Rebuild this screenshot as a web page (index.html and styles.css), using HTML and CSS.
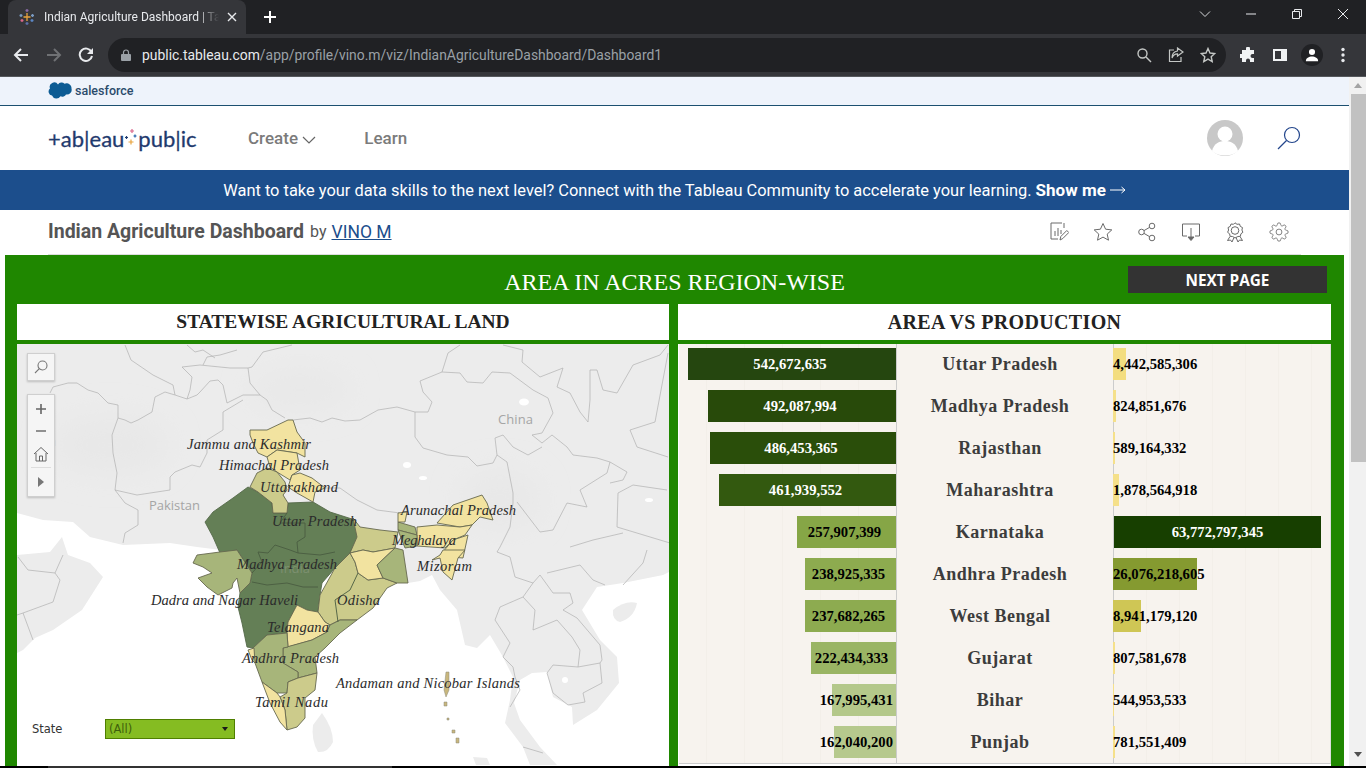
FILE: index.html
```html
<!DOCTYPE html>
<html lang="en">
<head>
  <meta charset="UTF-8">
  <title>Indian Agriculture Dashboard | Tableau Public</title>
  <link rel="stylesheet" href="styles.css">
</head>
<body>

<!-- browser chrome -->
<div class="tabstrip">
  <div class="tab">
    <svg class="favicon" viewBox="0 0 16 16" width="16" height="16" fill="none" stroke-width="1.3">
      <path d="M8 4v8M4.5 8h7" stroke="#e8a33d"/>
      <path d="M8 0v3M6.5 1.5h3" stroke="#8a6aa8"/>
      <path d="M8 13v3M6.5 14.5h3" stroke="#5c6fa8"/>
      <path d="M2 5v3M.5 6.500h3M13.500 5v3M12 6.500h3" stroke="#7b9bc2"/>
      <path d="M3 10v3M1.500 11.500h3" stroke="#d9668b"/>
      <path d="M13 10v3M11.500 11.500h3" stroke="#5b86c4"/>
    </svg>
    <span class="tab-title">Indian Agriculture Dashboard | Tableau Public</span>
    <svg class="tab-close" viewBox="0 0 10 10" width="10" height="10"><path d="M1 1l8 8M9 1l-8 8" stroke="#e8eaed" stroke-width="1.4"/></svg>
  </div>
  <svg class="new-tab" viewBox="0 0 12 12" width="12" height="12"><path d="M6 0v12M0 6h12" stroke="#fff" stroke-width="2"/></svg>
  <div class="window-controls">
    <svg viewBox="0 0 12 12" width="12" height="12"><path d="M1 3.500l5 5 5-5" fill="none" stroke="#d5d7da"/></svg>
    <svg viewBox="0 0 12 12" width="12" height="12"><path d="M1 6h10" stroke="#e8eaed"/></svg>
    <svg viewBox="0 0 12 12" width="12" height="12"><path d="M1.500 3.500h7v7h-7zM3.500 3.500v-2h7v7h-2" fill="none" stroke="#e8eaed"/></svg>
    <svg viewBox="0 0 12 12" width="12" height="12"><path d="M1 1l10 10M11 1L1 11" stroke="#e8eaed"/></svg>
  </div>
</div>

<div class="toolbar">
  <svg class="nav-btn" viewBox="0 0 16 16" width="16" height="16"><path d="M15 8H2M8 2L2 8l6 6" fill="none" stroke="#e8eaed" stroke-width="2"/></svg>
  <svg class="nav-btn" viewBox="0 0 16 16" width="16" height="16"><path d="M1 8h13M8 2l6 6-6 6" fill="none" stroke="#6f7174" stroke-width="2"/></svg>
  <svg class="nav-btn" viewBox="0 0 16 16" width="16" height="16"><path d="M13.500 5A6.200 6.200 0 1 0 14 9" fill="none" stroke="#e8eaed" stroke-width="2"/><path d="M15 1v6H9z" fill="#e8eaed"/></svg>
  <div class="omnibox">
    <svg class="lock" viewBox="0 0 10 12" width="10" height="12"><path d="M2.500 5V3.500a2.500 2.500 0 0 1 5 0V5" fill="none" stroke="#9aa0a6" stroke-width="1.200"/><rect y="5" width="10" height="7" rx="1" fill="#9aa0a6"/></svg>
    <span class="url"><b>public.tableau.com</b>/app/profile/vino.m/viz/IndianAgricultureDashboard/Dashboard1</span>
    <div class="omni-icons">
      <svg viewBox="0 0 16 16" width="16" height="16" fill="none" stroke="#c4c7c5" stroke-width="1.400"><circle cx="6.500" cy="6.500" r="4.500"/><path d="M10 10l5 5"/></svg>
      <svg viewBox="0 0 16 16" width="16" height="16" fill="none" stroke="#c4c7c5" stroke-width="1.200"><path d="M6 3H1.500v11.500H13V10"/><path d="M9.500 1l5.500 4-5.500 4V6.800C7 6.800 5 8 4 11c0-4 2-6.500 5.500-7z"/></svg>
      <svg viewBox="0 0 16 16" width="16" height="16" fill="none" stroke="#c4c7c5" stroke-width="1.400"><path d="M8 1.500l2 4.500 4.800.5-3.600 3.200 1 4.800L8 12.100l-4.200 2.400 1-4.800L1.200 6.500 6 6z"/></svg>
    </div>
  </div>
  <div class="ext-icons">
    <svg viewBox="0 0 16 16" width="16" height="16"><path d="M6 1.500a2 2 0 0 1 4 0V3h4v4h-1.500a2 2 0 0 0 0 4H14v4h-4v-1.500a2 2 0 0 0-4 0V15H2v-4H.8a2 2 0 0 1 0-4H2V3h4z" fill="#f1f3f4"/></svg>
    <svg viewBox="0 0 16 16" width="16" height="16"><path d="M1 2h14v12H1z" fill="#f1f3f4"/><path d="M3 4h6v8H3z" fill="#35363a"/></svg>
    <span class="profile">
      <svg viewBox="0 0 16 16" width="14" height="14"><circle cx="8" cy="4.500" r="3.500" fill="#fff"/><path d="M1 15c0-7 14-7 14 0z" fill="#fff"/></svg>
    </span>
    <svg class="menu-dots" viewBox="0 0 4 16" width="4" height="16"><circle cx="2" cy="2.500" r="1.700" fill="#e8eaed"/><circle cx="2" cy="8" r="1.700" fill="#e8eaed"/><circle cx="2" cy="13.500" r="1.700" fill="#e8eaed"/></svg>
  </div>
</div>

<div class="viewport">
  <div class="page">

    <div class="sf-bar">
      <svg viewBox="0 0 24 17" width="24" height="17"><path d="M10 2.500a4.300 4.300 0 0 1 6.500-.8 5 5 0 0 1 7 4.800 4.800 4.800 0 0 1-5.500 6 4 4 0 0 1-5.500 1.800 4.800 4.800 0 0 1-8.500-.8A4 4 0 0 1 2 6.500a4.500 4.500 0 0 1 8-4z" fill="#0d5c94"/></svg>
      <span>salesforce</span>
    </div>

    <header class="site-header">
      <div class="logo">
        <span>+ab|eau</span>
        <svg viewBox="0 0 14 18" width="14" height="18" fill="none" stroke-width="1.200">
          <path d="M8 0v4M6 2h4" stroke="#d9668b"/>
          <path d="M2.500 7v3M1 8.500h3" stroke="#1f3a6e"/>
          <path d="M11 5.500v3M9.500 7h3" stroke="#1f5fa8"/>
          <path d="M7 10.500v5M4.500 13h5" stroke="#e8a33d"/>
        </svg>
        <span>pub|ic</span>
      </div>
      <nav class="site-nav">
        <a>Create <svg viewBox="0 0 14 8" width="14" height="8"><path d="M1 1l6 6 6-6" fill="none" stroke="#666" stroke-width="1.200"/></svg></a>
        <a>Learn</a>
      </nav>
      <div class="header-right">
        <svg viewBox="0 0 36 36" width="36" height="36">
          <circle cx="18" cy="18" r="18" fill="#c8c8c8"/>
          <circle cx="18" cy="14" r="7.500" fill="#fff"/>
          <path d="M5 31c2-8 8-10 13-10s11 2 13 10c-6 6-20 6-26 0z" fill="#fff"/>
        </svg>
        <svg viewBox="0 0 24 24" width="24" height="24" fill="none" stroke="#23468c" stroke-width="1.200"><circle cx="15" cy="9" r="7.500"/><path d="M9.500 14.500L1 23"/></svg>
      </div>
    </header>

    <div class="promo">
      <span>Want to take your data skills to the next level? Connect with the Tableau Community to accelerate your learning.</span>
      <b>Show me</b>
      <svg viewBox="0 0 16 10" width="16" height="10"><path d="M0 5h15M11.500 2l3.500 3-3.500 3" fill="none" stroke="#fff"/></svg>
    </div>

    <div class="viz-head">
      <h1>Indian Agriculture Dashboard</h1>
      <span class="by">by</span>
      <a class="author">VINO M</a>
      <div class="viz-actions">
        <svg viewBox="0 0 20 20" width="20" height="20"><path d="M13 1H2v16h7M15 1v5M6 14V9M9 14V6M12 12V8"/><path d="M11 18l.8-3.500 6-6 2 2-6 6z"/></svg>
        <svg viewBox="0 0 20 20" width="20" height="20"><path d="M10 1.500l2.600 5.700 6.200.7-4.600 4.200 1.300 6.100L10 15.100l-5.500 3.100 1.300-6.100L1.200 7.900l6.200-.7z"/></svg>
        <svg viewBox="0 0 20 20" width="20" height="20"><circle cx="4.500" cy="10" r="2.800"/><circle cx="15" cy="4" r="2.800"/><circle cx="15" cy="16" r="2.800"/><path d="M7 8.600l5.500-3.200M7 11.400l5.500 3.200"/></svg>
        <svg viewBox="0 0 20 20" width="20" height="20"><path d="M6 14H1.500V2h17v12H14M10 6v10"/><path d="M7 15h6l-3 3.500z" fill="#666"/></svg>
        <svg viewBox="0 0 20 20" width="20" height="20"><path d="M10 .8l2 1.500 2.500-.3.800 2.400 2.200 1.200-.6 2.400 1 2.300-2 1.500-.5 2.500-2.500.2L10 16l-2.400-1.500-2.500-.2-.5-2.500-2-1.500 1-2.300-.6-2.400 2.200-1.200.8-2.400 2.500.3z"/><circle cx="10" cy="8.500" r="3.800"/><path d="M5 14.500l-2.500 4 3-.5 1.500 2 2-4.500M15 14.500l2.500 4-3-.5-1.500 2-2-4.500"/></svg>
        <svg viewBox="0 0 24 24" width="20" height="20" stroke-width="1.200"><circle cx="12" cy="12" r="3.500"/><path d="M19.400 15a1.650 1.650 0 0 0 .33 1.820l.06.06a2 2 0 0 1 0 2.830 2 2 0 0 1-2.830 0l-.06-.06a1.650 1.650 0 0 0-1.820-.33 1.650 1.650 0 0 0-1 1.510V21a2 2 0 0 1-2 2 2 2 0 0 1-2-2v-.09A1.650 1.650 0 0 0 9 19.400a1.650 1.650 0 0 0-1.820.33l-.06.06a2 2 0 0 1-2.830 0 2 2 0 0 1 0-2.830l.06-.06a1.650 1.650 0 0 0 .33-1.820 1.650 1.650 0 0 0-1.510-1H3a2 2 0 0 1-2-2 2 2 0 0 1 2-2h.09A1.650 1.650 0 0 0 4.600 9a1.650 1.650 0 0 0-.33-1.820l-.06-.06a2 2 0 0 1 0-2.830 2 2 0 0 1 2.830 0l.06.06a1.650 1.650 0 0 0 1.820.33H9a1.650 1.650 0 0 0 1-1.510V3a2 2 0 0 1 2-2 2 2 0 0 1 2 2v.09a1.650 1.650 0 0 0 1 1.510 1.650 1.650 0 0 0 1.820-.33l.06-.06a2 2 0 0 1 2.830 0 2 2 0 0 1 0 2.830l-.06.06a1.650 1.650 0 0 0-.33 1.820V9a1.650 1.650 0 0 0 1.510 1H21a2 2 0 0 1 2 2 2 2 0 0 1-2 2h-.09a1.650 1.650 0 0 0-1.510 1z"/></svg>
      </div>
    </div>

    <main class="dash">
      <div class="dash-top">
        <span></span>
        <h2>AREA IN ACRES REGION-WISE</h2>
        <button class="next-page">NEXT PAGE</button>
      </div>

      <div class="dash-cards">
        <section class="card">
          <h3>STATEWISE AGRICULTURAL LAND</h3>
          <div class="map">
            <svg class="map-svg" viewBox="17 344 652 424" width="652" height="424">
              <defs>
                <filter id="soft"><feGaussianBlur stdDeviation="0.7"/></filter>
                <filter id="haze"><feGaussianBlur stdDeviation="14"/></filter>
              </defs>

              <!-- land -->
              <g class="land" filter="url(#soft)">
                <path d="M17 344H669V572L663 575 623 583 597 587 582 610 600 640 617 657 619 683 597 710 573 725 572 707 553 697 547 672 532 673 520 680 514 703 520 720 540 747 557 765H530L523 747 505 723 510 700 513 677 503 657 490 635 477 648 465 645 457 610 440 590 432 575 420 581 408 583 300 560 197 547 170 543 123 545 90 537 73 522 43 520 17 513Z"/>
                <path d="M17 555L50 552 62 537 68 555 90 563 103 577 82 610 53 630 35 638 23 650 17 653Z"/>
                <path d="M613 610Q625 600 637 603 634 618 620 622 612 620 613 610Z"/>
                <path d="M322 713Q333 728 333 742 328 753 318 752 311 740 313 725Z"/>
                <path d="M473 757L487 758 490 765H476Z"/>
              </g>
              <g class="haze" filter="url(#haze)">
                <ellipse cx="110" cy="445" rx="60" ry="30"/>
                <ellipse cx="500" cy="500" rx="40" ry="30"/>
                <ellipse cx="300" cy="390" rx="50" ry="20"/>
              </g>
              <g class="lakes">
                <ellipse cx="524" cy="402" rx="5" ry="3.500"/>
                <ellipse cx="407" cy="465" rx="4" ry="3"/>
                <ellipse cx="423" cy="478" rx="4" ry="2"/>
                <ellipse cx="649" cy="500" rx="4" ry="2"/>
                <ellipse cx="565" cy="680" rx="3" ry="3"/>
              </g>

              <!-- country borders -->
              <g class="borders">
                <path d="M50 393L53 387 68 383 77 383 88 390 98 393 108 403 118 405 118 418 112 435 113 453 117 473 115 490 125 503 138 510 138 525 125 533 123 543"/>
                <path d="M118 418L125 420 131 423 138 420 152 412 155 397 165 392 175 395 187 399 197 395 200 392 210 381 218 380 223 385 227 403 243 395 260 395 267 400 272 410 285 418"/>
                <path d="M115 490L137 495 170 490 170 477 175 472 192 465 200 467 207 453 207 440 223 430 223 412 243 400"/>
                <path d="M125 345L131 360 153 375 173 385 175 395"/>
                <path d="M182 367L192 377 190 390 187 399M182 367L200 365 230 368 248 368 250 383 260 395M248 368L252 367 263 352 292 345"/>
                <path d="M203 365L207 357 220 355 237 350M187 345L195 352 203 350 215 358"/>
                <path d="M293 420L310 418 322 422 332 418 345 421 360 420 378 410 397 407 415 412 428 412 432 402 423 392 420 381 442 372 448 353 460 345"/>
                <path d="M415 412L415 437 423 448 447 455 468 457 477 466 493 463 497 455 507 462 513 493 513 503 510 527 500 547 497 552"/>
                <path d="M325 488L340 488 357 500 377 510 400 513"/>
                <path d="M442 372L460 373 467 382 483 383 492 372 510 373 533 390 548 398 553 413 542 433 532 435 542 443 552 435 567 447 573 455 597 458 610 462 627 472 623 480 610 483"/>
                <path d="M497 455L495 438 503 435 513 447 528 455 542 447"/>
                <path d="M503 345L523 350 522 362 540 377 563 368 557 387 570 393 580 412 588 422 590 400 590 370 597 370 603 390 617 393 633 365 660 355 668 345"/>
                <path d="M630 430L655 422 668 353M630 430L637 447 668 457M618 493L633 485 667 490M618 493L617 527 670 543M570 547L593 540 623 533"/>
                <path d="M517 502L540 532 553 530 567 503 587 507 580 490 607 473 610 462"/>
                <path d="M497 552L510 557 515 577 533 583 523 597 500 607 495 620 510 643 503 657 513 667 515 677 520 690 510 707"/>
                <path d="M533 583L540 575 553 593 570 593 573 603 563 610 577 618 600 645 602 660 600 663 578 667 580 650 572 637 557 620 533 630 535 610 523 597"/>
                <path d="M600 663L602 683 583 693 585 702 568 705 553 693 547 673 553 665 578 667"/>
                <path d="M547 573L580 565 593 580 605 585M623 585L643 563 647 550M523 747L543 753"/>
                <path d="M18 557L28 570 55 573 60 580 53 602 23 613 33 640M55 573L63 555M17 615L23 613"/>
              </g>

              <!-- Indian states -->
              <g class="states">
                <path class="dark" d="M248 487L258 492 272 503 273 513 287 513 288 503 313 502 330 512 355 520 358 537 350 553 345 560 335 568 322 583 320 595 318 612 307 610 297 605 288 622 287 633 267 635 253 648 247 647 242 623 238 607 240 593 250 583 252 573 237 550 220 553 213 537 205 522 213 512 233 498Z"/>
                <path class="mid" d="M193 563L197 555 220 552 237 550 252 573 250 583 240 593 237 578 233 583 232 588 218 595 207 587 198 578 212 573 203 567Z"/>
                <path class="yel" d="M250 430L267 430 288 420 293 420 297 432 305 443 305 457 297 453 277 450 267 457 258 453 253 443 250 435Z"/>
                <path class="yel" d="M267 457L277 450 297 453 300 470 292 475 290 480 277 472 270 467Z"/>
                <path class="yel" d="M292 475L300 473 312 478 325 488 315 492 313 502 297 493 288 487Z"/>
                <path class="kha" d="M257 473L267 468 277 472 285 482 287 490 283 495 288 503 287 513 273 513 272 503 258 492 250 487Z"/>
                <path class="kha" d="M353 518L360 527 380 530 398 532 395 548 373 552 363 550 350 553 357 537Z"/>
                <path class="kha" d="M335 568L350 553 355 562 358 573 368 580 383 578 397 583 387 588 373 608 357 620 340 620 330 625 325 622 318 612 320 595Z"/>
                <path class="yel" d="M350 553L363 550 373 552 395 548 377 565 383 578 368 580 358 573 355 562Z"/>
                <path class="mid" d="M395 548L403 550 408 583 397 583 383 578 377 565Z"/>
                <path class="mid" d="M398 522L415 527 417 535 398 530Z"/>
                <path class="yel" d="M398 513L407 512 405 522 398 522Z"/>
                <path class="yel" d="M297 605L307 610 318 612 325 622 330 625 327 632 312 640 288 647 287 633 288 622Z"/>
                <path class="mid" d="M357 620L340 633 325 648 315 657 317 673 298 678 298 672 283 663 283 648 312 640 327 632 330 625 340 620Z"/>
                <path class="mid" d="M253 648L267 635 287 633 288 647 283 648 283 663 298 672 298 678 288 682 287 693 277 693 262 682 255 663Z"/>
                <path class="kha" d="M288 682L298 678 317 673 315 690 305 698 305 718 297 727 287 730 285 710 280 697 287 693Z"/>
                <path class="yel" d="M262 682L277 693 280 697 285 710 287 730 280 722 270 703Z"/>
                <path class="yel" d="M248 650L254 648 255 663 252 660Z"/>
                <path class="yel" d="M437 523L453 505 482 495 487 503 493 520 480 517 472 525 460 527Z"/>
                <path class="yel" d="M417 527L437 525 460 527 472 525 465 535 453 540 445 548 417 546Z"/>
                <path class="yel" d="M453 540L468 535 463 558 450 557 442 553Z"/>
                <path class="yel" d="M432 560L440 555 443 550 465 550 458 558 452 580 443 572 440 558Z"/>
                <path class="mid" d="M398 530L417 535 417 546 405 548Z"/>
                <path class="inner" d="M287 513L280 523 305 523 305 537 297 542 298 553M268 553L275 545 290 550 298 553 320 555 335 552M252 573L262 562 258 552 268 553M252 582L267 585 287 583 303 587 318 587M335 600L338 622M335 600L350 590 358 573"/>
                <path class="isle" d="M446 672L449 672 449 690 446 697 444 690ZM444 702h3v4h-3zM447 718h2v2h-2zM452 730h3v3h-3zM456 738h3v5h-3z"/>
              </g>

              <!-- labels -->
              <g class="geo-labels">
                <text x="498" y="424" textLength="35">China</text>
                <text x="149" y="510" textLength="51">Pakistan</text>
                <text x="32" y="446" class="faint">Iran</text>
                <text x="280" y="573" class="india">India</text>
              </g>
              <g class="state-labels">
                <text x="187" y="449" textLength="124">Jammu and Kashmir</text>
                <text x="219" y="470" textLength="110">Himachal Pradesh</text>
                <text x="260" y="492" textLength="78">Uttarakhand</text>
                <text x="272" y="526" textLength="85">Uttar Pradesh</text>
                <text x="401" y="515" textLength="115">Arunachal Pradesh</text>
                <text x="392" y="545" textLength="64">Meghalaya</text>
                <text x="417" y="571" textLength="55">Mizoram</text>
                <text x="237" y="569" textLength="100">Madhya Pradesh</text>
                <text x="337" y="605" textLength="43">Odisha</text>
                <text x="151" y="605" textLength="147">Dadra and Nagar Haveli</text>
                <text x="267" y="632" textLength="62">Telangana</text>
                <text x="242" y="663" textLength="97">Andhra Pradesh</text>
                <text x="336" y="688" textLength="184">Andaman and Nicobar Islands</text>
                <text x="255" y="707" textLength="73">Tamil Nadu</text>
              </g>
            </svg>

            <div class="map-tool search-tool">
              <svg viewBox="0 0 14 14" width="14" height="14" fill="none" stroke="#777" stroke-width="1.100"><circle cx="8.500" cy="5.500" r="4.500"/><path d="M5.300 8.700L1 13"/></svg>
            </div>
            <div class="map-tool zoom-tool">
              <svg viewBox="0 0 12 12" width="12" height="12"><path d="M6 1v10M1 6h10" stroke="#666" stroke-width="1.600"/></svg>
              <svg viewBox="0 0 12 12" width="12" height="12"><path d="M1 6h10" stroke="#777" stroke-width="1.600"/></svg>
              <svg viewBox="0 0 16 16" width="16" height="16" fill="none" stroke="#666"><path d="M1 8l7-6.500L15 8M3 7v8h10V7M6.500 15v-5h3v5"/></svg>
              <hr>
              <svg viewBox="0 0 8 12" width="8" height="12"><path d="M1 1l6 5-6 5z" fill="#777"/></svg>
            </div>
            <div class="state-filter">
              <label>State</label>
              <div class="state-select"><span>(All)</span><i></i></div>
            </div>
          </div>
        </section>

        <section class="card">
          <h3>AREA VS PRODUCTION</h3>
          <div class="chart">
            <div class="pane pane-area">
              <div class="bar light" style="width:208px;background:#25460f">542,672,635</div>
              <div class="bar light" style="width:188px;background:#284a0a">492,087,994</div>
              <div class="bar light" style="width:186px;background:#2a4e0a">486,453,365</div>
              <div class="bar light" style="width:177px;background:#33590f">461,939,552</div>
              <div class="bar" style="width:99px;background:#86a646">257,907,399</div>
              <div class="bar" style="width:91px;background:#8dab4f">238,925,335</div>
              <div class="bar" style="width:91px;background:#8dab50">237,682,265</div>
              <div class="bar" style="width:85px;background:#9ab564">222,434,333</div>
              <div class="bar tight" style="width:64px;background:#b4c88a">167,995,431</div>
              <div class="bar tight" style="width:62px;background:#b6c98d">162,040,200</div>
            </div>
            <div class="pane pane-names">
              <div>Uttar Pradesh</div>
              <div>Madhya Pradesh</div>
              <div>Rajasthan</div>
              <div>Maharashtra</div>
              <div>Karnataka</div>
              <div>Andhra Pradesh</div>
              <div>West Bengal</div>
              <div>Gujarat</div>
              <div>Bihar</div>
              <div>Punjab</div>
            </div>
            <div class="pane pane-prod">
              <div class="bar" style="width:13px;background:#f3dd80">4,442,585,306</div>
              <div class="bar" style="width:3px;background:#f5e08a">824,851,676</div>
              <div class="bar" style="width:2px;background:#f5e08a">589,164,332</div>
              <div class="bar" style="width:6px;background:#f5e08a">1,878,564,918</div>
              <div class="bar light full" style="width:207px;background:#173f00">63,772,797,345</div>
              <div class="bar" style="width:84px;background:#859a30">26,076,218,605</div>
              <div class="bar" style="width:28px;background:#cfc655">8,941,179,120</div>
              <div class="bar" style="width:2px;background:#f5e08a">807,581,678</div>
              <div class="bar" style="width:1px;background:#f5e08a">544,953,533</div>
              <div class="bar" style="width:2px;background:#f5e08a">781,551,409</div>
            </div>
          </div>
        </section>
      </div>
    </main>
  </div>

  <div class="scrollbar">
    <i class="arrow-up"></i>
    <div class="thumb"></div>
    <i class="arrow-down"></i>
  </div>

  <!-- bottom edge of the desktop taskbar -->
  <div class="taskbar-edge"><span></span></div>
</div>

</body>
</html>
```

FILE: styles.css
```css
* {
  box-sizing: border-box;
}
html, body {
  margin: 0;
  height: 768px;
  overflow: hidden;
}
body {
  width: 1366px;
  display: flex;
  flex-direction: column;
  font-family: Roboto, "Liberation Sans", sans-serif;
  background: #fff;
}

/* browser chrome */
.tabstrip {
  height: 34px;
  flex: none;
  background: #202124;
  display: flex;
  align-items: flex-end;
  padding-left: 8px;
  position: relative;
}
.tab {
  width: 238px;
  height: 34px;
  background: #35363a;
  border-radius: 8px 8px 0 0;
  display: flex;
  align-items: center;
  padding: 0 9px 0 11px;
  color: #e8eaed;
  font-size: 12px;
}
.favicon {
  flex: none;
  margin-right: 9px;
}
.tab-title {
  flex: 1;
  white-space: nowrap;
  overflow: hidden;
  -webkit-mask-image: linear-gradient(to right, #000 88%, transparent);
  mask-image: linear-gradient(to right, #000 88%, transparent);
}
.tab-close {
  flex: none;
  margin-left: 8px;
}
.new-tab {
  align-self: center;
  margin-left: 18px;
}
.window-controls {
  margin-left: auto;
  align-self: flex-start;
  height: 28px;
  display: flex;
  align-items: center;
  gap: 34px;
  padding-right: 17px;
}
.toolbar {
  height: 43px;
  flex: none;
  background: #35363a;
  border-bottom: 1px solid #55585c;
  display: flex;
  align-items: center;
  padding-left: 13px;
}
.nav-btn {
  margin-right: 17px;
}
.nav-btn:nth-child(2) {
  margin-right: 16px;
}
.nav-btn:nth-child(3) {
  margin-right: 14px;
}
.omnibox {
  width: 1118px;
  height: 34px;
  background: #202124;
  border-radius: 17px;
  display: flex;
  align-items: center;
  padding-left: 13px;
}
.lock {
  margin-right: 11px;
}
.url {
  font-size: 13.9px;
  color: #9aa0a6;
  white-space: nowrap;
}
.url b {
  font-weight: 400;
  color: #e8eaed;
}
.omni-icons {
  margin-left: auto;
  display: flex;
  gap: 16px;
  padding-right: 10px;
}
.ext-icons {
  display: flex;
  align-items: center;
  margin-left: 14px;
  gap: 16px;
}
.profile {
  width: 22px;
  height: 22px;
  border-radius: 50%;
  background: #202124;
  display: flex;
  align-items: center;
  justify-content: center;
  margin: 0 -3px;
}
.menu-dots {
  margin-left: 5px;
}

/* page below the chrome */
.viewport {
  flex: 1;
  display: flex;
  min-height: 0;
  position: relative;
}
.page {
  width: 1349px;
  display: flex;
  flex-direction: column;
}
.scrollbar {
  width: 17px;
  background: #f1f1f1;
  display: flex;
  flex-direction: column;
  align-items: center;
  padding-top: 6px;
}
.arrow-up {
  border: 4px solid transparent;
  border-top: 0;
  border-bottom: 5px solid #a3a3a3;
  width: 0;
}
.thumb {
  width: 15px;
  height: 368px;
  margin-top: 6px;
  margin-left: 1px;
  background: #c1c1c1;
}
.arrow-down {
  border: 4px solid transparent;
  border-bottom: 0;
  border-top: 5px solid #505050;
  width: 0;
  margin-top: 290px;
}
.taskbar-edge {
  position: absolute;
  left: 0;
  right: 0;
  bottom: 0;
  height: 2px;
  background: #000;
}
.taskbar-edge span {
  display: block;
  margin-left: 48px;
  width: 344px;
  height: 2px;
  background: #333;
}

.sf-bar {
  height: 29px;
  flex: none;
  background: #eef3fb;
  border-bottom: 1px solid #1c5070;
  display: flex;
  align-items: center;
  padding: 0 0 1px 48px;
  gap: 3px;
  font-size: 12.5px;
  font-weight: 500;
  color: #2b4b6b;
}

.site-header {
  height: 64px;
  flex: none;
  display: flex;
  align-items: center;
  padding: 0 48px;
}
.logo {
  display: flex;
  align-items: center;
  font-family: Lato, sans-serif;
  font-size: 22px;
  color: #1f3a6e;
  width: 148px;
  -webkit-text-stroke: .3px #1f3a6e;
}
.logo svg {
  flex: none;
}
.site-nav {
  display: flex;
  margin-left: 52px;
  gap: 48px;
  font-size: 17px;
  font-weight: 500;
  color: #7b7b7b;
}
.header-right {
  margin-left: auto;
  display: flex;
  align-items: center;
  gap: 34px;
}

.promo {
  height: 40px;
  flex: none;
  background: #1c4e8c;
  color: #fff;
  display: flex;
  align-items: center;
  justify-content: center;
  gap: 4px;
  font-size: 16.42px;
}
.promo b {
  font-size: 17px;
  font-weight: 700;
}

.viz-head {
  height: 45px;
  flex: none;
  margin: 0 48px;
  border-bottom: 1px solid #ddd;
  display: flex;
  align-items: center;
  padding-bottom: 1px;
  color: #555;
}
.viz-head h1 {
  margin: 0;
  font-size: 19.5px;
  font-weight: 700;
}
.by {
  margin: 0 5px 0 6px;
  font-size: 16px;
}
.author {
  font-size: 17.5px;
  color: #1c4e8c;
  text-decoration: underline;
}
.viz-actions {
  margin-left: auto;
  display: flex;
  gap: 24px;
  padding-right: 12px;
}
.viz-actions svg {
  fill: none;
  stroke: #6a6a6a;
  stroke-width: 1;
}

/* dashboard */
.dash {
  flex: 1;
  min-height: 0;
  margin: 0 5px;
  padding: 0 13px 0 12px;
  background: #1f8700;
}
.dash-top {
  height: 49px;
  display: grid;
  grid-template-columns: 1fr auto 1fr;
  align-items: center;
}
.dash-top h2 {
  margin: 6px 0 0 1px;
  font: 400 24px "Liberation Serif", serif;
  color: #fff;
}
.next-page {
  justify-self: end;
  width: 199px;
  height: 27px;
  margin: 0 4px 0 0;
  border: 0;
  background: #333;
  color: #fff;
  font: 700 15.3px "Open Sans", sans-serif;
}
.dash-cards {
  display: flex;
  gap: 9px;
  align-items: flex-start;
}
.card {
  width: 652px;
  flex: none;
}
.card:last-child {
  width: 653px;
  background: #fff;
  height: 462px;
}
.card h3 {
  margin: 0 0 4px;
  height: 36px;
  background: #fff;
  text-align: center;
  font: 700 19.5px/36px "Liberation Serif", serif;
  color: #222;
}
.card:last-child h3 {
  border-bottom: 4px solid #1f8700;
  height: 40px;
  margin: 0;
  font-size: 20px;
  letter-spacing: .35px;
}

/* map */
.map {
  position: relative;
  height: 424px;
  background: #fff;
  overflow: hidden;
}
.map-svg {
  display: block;
}
.land path {
  fill: #ececec;
}
.haze ellipse {
  fill: #e8e8e8;
}
.lakes ellipse {
  fill: #fff;
}
.borders path {
  fill: none;
  stroke: #b0b0b0;
  stroke-width: .7;
}
.states path {
  stroke: #66694f;
  stroke-width: .9;
}
.states .dark {
  fill: #647f56;
  stroke: #55694a;
}
.states .mid {
  fill: #a7b57a;
}
.states .kha {
  fill: #cccb8b;
}
.states .yel {
  fill: #f2e3a0;
}
.states .inner {
  fill: none;
  stroke: #4a5c41;
}
.states .isle {
  fill: #c9b77d;
  stroke: #8a8a7a;
  stroke-width: .5;
}
.geo-labels text {
  font: 13px "Open Sans", sans-serif;
  fill: #a5a5a5;
}
.geo-labels .faint {
  fill: #dcdcdc;
}
.geo-labels .india {
  fill: #7d9070;
}
.state-labels text {
  font: italic 14.5px "Liberation Serif", serif;
  fill: #2b2b2b;
}
.map-tool {
  position: absolute;
  left: 10px;
  width: 28px;
  background: #f5f5f5;
  border: 1px solid #cfcfcf;
  box-shadow: 0 1px 2px rgba(0,0,0,0.2);
  display: flex;
  flex-direction: column;
  align-items: center;
}
.search-tool {
  top: 9px;
  height: 28px;
  justify-content: center;
}
.zoom-tool {
  top: 50px;
  height: 103px;
  padding-top: 8px;
}
.zoom-tool svg:nth-child(2) {
  margin-top: 10px;
}
.zoom-tool svg:nth-child(3) {
  margin-top: 9px;
}
.zoom-tool hr {
  width: 20px;
  margin: 5px 0 8px;
  border: 0;
  border-top: 1px solid #ddd;
}
.state-filter {
  position: absolute;
  left: 15px;
  top: 375px;
  display: flex;
  align-items: center;
  font: 11.5px "DejaVu Sans", sans-serif;
  color: #333;
}
.state-filter label {
  width: 73px;
}
.state-select {
  width: 130px;
  height: 20px;
  background: #85bc22;
  border: 1px solid #4f7f00;
  display: flex;
  align-items: center;
  justify-content: space-between;
  padding: 0 6px 0 3px;
  color: #3f5f0c;
}
.state-select i {
  border: 3.5px solid transparent;
  border-top: 4px solid #1a1a1a;
  border-bottom: 0;
}

/* bars */
.chart {
  height: 420px;
  margin-left: 1px;
  display: flex;
  background: #f7f3ee;
  border-bottom: 1px solid #ccc;
  border-right: 1px solid #ddd;
}
.pane {
  display: flex;
  flex-direction: column;
  gap: 10px;
  padding-top: 4px;
}
.pane > div {
  height: 32px;
  flex: none;
}
.pane-area {
  width: 218px;
  align-items: flex-end;
  border-right: 1px solid #ccc;
  background: repeating-linear-gradient(to left, transparent 0 37px, #f3efe9 37px 38px);
}
.pane-names {
  width: 217px;
  border-right: 1px solid #ccc;
}
.pane-names div {
  display: flex;
  align-items: center;
  justify-content: center;
  padding: 1px 10px 0 0;
  font: 700 18px "Liberation Serif", serif;
  letter-spacing: .5px;
  color: #3c3c3c;
}
.pane-prod {
  flex: 1;
  background: repeating-linear-gradient(to right, transparent 0 32px, #f3efe9 32px 33px);
}
.bar {
  display: flex;
  align-items: center;
  justify-content: center;
  padding-right: 4px;
  white-space: nowrap;
  font: 700 14.67px "Liberation Serif", serif;
  color: #000;
}
.bar.light {
  color: #fff;
}
.bar.tight {
  justify-content: flex-end;
  padding-right: 3px;
}
.pane-prod .bar {
  justify-content: flex-start;
  padding-right: 0;
  margin-left: -1px;
}
.pane-prod .bar.full {
  justify-content: center;
  margin-left: 0;
}
```
